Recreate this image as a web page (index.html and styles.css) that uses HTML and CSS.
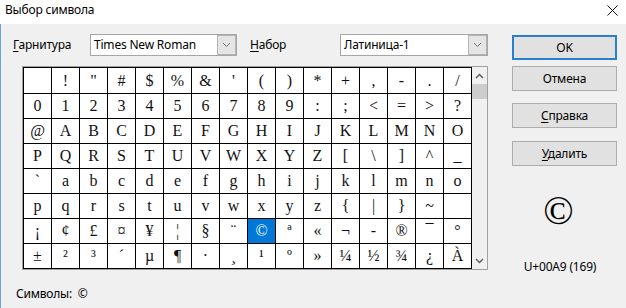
FILE: index.html
```html
<!DOCTYPE html>
<html lang="ru">
<head>
<meta charset="utf-8">
<title>Выбор символа</title>
<link rel="stylesheet" href="styles.css">
</head>
<body>
<div class="dialog">
  <div class="titlebar">
    <span class="title">Выбор символа</span>
    <svg class="close" width="11" height="11" viewBox="0 0 11 11"><path d="M0.5 0.5 L10.5 10.5 M10.5 0.5 L0.5 10.5" stroke="#111" stroke-width="1" fill="none"/></svg>
  </div>
  <div class="body">
    <div class="left">
      <div class="toprow">
        <span class="lbl lbl1"><u>Г</u>арнитура</span>
        <div class="combo combo1"><span class="ctext">Times New Roman</span><span class="dd"><svg width="9" height="6" viewBox="0 0 9 6"><path d="M1 1 L4.5 4.5 L8 1" stroke="#707070" stroke-width="1" fill="none"/></svg></span></div>
        <span class="lbl lbl2"><u>Н</u>абор</span>
        <div class="combo combo2"><span class="ctext">Латиница-1</span><span class="dd"><svg width="9" height="6" viewBox="0 0 9 6"><path d="M1 1 L4.5 4.5 L8 1" stroke="#707070" stroke-width="1" fill="none"/></svg></span></div>
      </div>
      <div class="frame">
        <div class="grid">
          <div class="cell">&nbsp;</div><div class="cell">!</div><div class="cell">"</div><div class="cell">#</div><div class="cell">$</div><div class="cell">%</div><div class="cell">&amp;</div><div class="cell">'</div><div class="cell">(</div><div class="cell">)</div><div class="cell">*</div><div class="cell">+</div><div class="cell">,</div><div class="cell">-</div><div class="cell">.</div><div class="cell">/</div>
          <div class="cell">0</div><div class="cell">1</div><div class="cell">2</div><div class="cell">3</div><div class="cell">4</div><div class="cell">5</div><div class="cell">6</div><div class="cell">7</div><div class="cell">8</div><div class="cell">9</div><div class="cell">:</div><div class="cell">;</div><div class="cell">&lt;</div><div class="cell">=</div><div class="cell">&gt;</div><div class="cell">?</div>
          <div class="cell">@</div><div class="cell">A</div><div class="cell">B</div><div class="cell">C</div><div class="cell">D</div><div class="cell">E</div><div class="cell">F</div><div class="cell">G</div><div class="cell">H</div><div class="cell">I</div><div class="cell">J</div><div class="cell">K</div><div class="cell">L</div><div class="cell">M</div><div class="cell">N</div><div class="cell">O</div>
          <div class="cell">P</div><div class="cell">Q</div><div class="cell">R</div><div class="cell">S</div><div class="cell">T</div><div class="cell">U</div><div class="cell">V</div><div class="cell">W</div><div class="cell">X</div><div class="cell">Y</div><div class="cell">Z</div><div class="cell">[</div><div class="cell">\</div><div class="cell">]</div><div class="cell">^</div><div class="cell">_</div>
          <div class="cell">`</div><div class="cell">a</div><div class="cell">b</div><div class="cell">c</div><div class="cell">d</div><div class="cell">e</div><div class="cell">f</div><div class="cell">g</div><div class="cell">h</div><div class="cell">i</div><div class="cell">j</div><div class="cell">k</div><div class="cell">l</div><div class="cell">m</div><div class="cell">n</div><div class="cell">o</div>
          <div class="cell">p</div><div class="cell">q</div><div class="cell">r</div><div class="cell">s</div><div class="cell">t</div><div class="cell">u</div><div class="cell">v</div><div class="cell">w</div><div class="cell">x</div><div class="cell">y</div><div class="cell">z</div><div class="cell">{</div><div class="cell">|</div><div class="cell">}</div><div class="cell">~</div><div class="cell">&nbsp;</div>
          <div class="cell">¡</div><div class="cell">¢</div><div class="cell">£</div><div class="cell">¤</div><div class="cell">¥</div><div class="cell">¦</div><div class="cell">§</div><div class="cell">¨</div><div class="cell sel">©</div><div class="cell">ª</div><div class="cell">«</div><div class="cell">¬</div><div class="cell">-</div><div class="cell">®</div><div class="cell">¯</div><div class="cell">°</div>
          <div class="cell">±</div><div class="cell">²</div><div class="cell">³</div><div class="cell">´</div><div class="cell">µ</div><div class="cell">¶</div><div class="cell">·</div><div class="cell">¸</div><div class="cell">¹</div><div class="cell">º</div><div class="cell">»</div><div class="cell">¼</div><div class="cell">½</div><div class="cell">¾</div><div class="cell">¿</div><div class="cell">À</div>
        </div>
        <div class="scroll">
          <div class="arrow"><svg width="9" height="6" viewBox="0 0 9 6"><path d="M1 5 L4.5 1.5 L8 5" stroke="#606060" stroke-width="1.5" fill="none"/></svg></div>
          <div class="thumb"></div>
          <div class="track"></div>
          <div class="arrow"><svg width="9" height="6" viewBox="0 0 9 6"><path d="M1 1 L4.5 4.5 L8 1" stroke="#606060" stroke-width="1.5" fill="none"/></svg></div>
        </div>
      </div>
      <div class="sym">Символы:&nbsp; ©</div>
    </div>
    <div class="right">
      <div class="btn ok">OK</div>
      <div class="btn cancel">Отмена</div>
      <div class="btn help"><span><u>С</u>правка</span></div>
      <div class="btn del"><span><u>У</u>далить</span></div>
      <div class="preview">©</div>
      <div class="code">U+00A9 (169)</div>
    </div>
  </div>
</div>
</body>
</html>
```
FILE: styles.css
```css
* { box-sizing: border-box; }
html, body { margin: 0; padding: 0; }
body {
  width: 626px;
  height: 308px;
  overflow: hidden;
  background: #f0f0f0;
  font-family: "Noto Sans", "Open Sans", sans-serif;
  font-size: 12px;
  letter-spacing: -0.2px;
  color: #000;
}
u { text-decoration: underline; text-underline-offset: 2px; }
.dialog {
  width: 626px;
  height: 308px;
  display: flex;
  flex-direction: column;
}
.titlebar {
  height: 24px;
  background: #fff;
  display: flex;
  align-items: center;
  justify-content: space-between;
  padding: 0 8px 0 5px;
}
.title { font-size: 12px; line-height: 16px; margin-top: -4px; }
.close { margin-top: -3px; }
.body {
  flex: 1;
  display: flex;
  padding: 10px 0 0 12px;
  border-left: 1px solid #6aa5dc;
}
.left {
  width: 475px;
  display: flex;
  flex-direction: column;
}
.toprow {
  display: flex;
  align-items: center;
  height: 22px;
}
.lbl { line-height: 16px; }
.lbl1 { width: 77px; }
.lbl2 { width: 90px; margin-left: 13px; }
.combo {
  height: 22px;
  background: #fff;
  border: 1px solid #a6a6a6;
  display: flex;
  align-items: center;
  padding-left: 3px;
}
.combo1 { width: 147px; }
.combo2 { width: 148px; }
.ctext { line-height: 16px; }
.dd {
  margin-left: auto;
  width: 19px;
  height: 20px;
  background: #e5e5e5;
  border: 1px solid #b4b4b4;
  display: flex;
  align-items: center;
  justify-content: center;
}
.frame {
  margin: 10px 0 0 9px;
  width: 466px;
  height: 204px;
  border: 1px solid #a0a0a0;
  display: flex;
}
.grid {
  width: 449px;
  height: 202px;
  display: grid;
  grid-template-columns: repeat(16, 27px);
  grid-template-rows: 25px repeat(7, 24px);
  gap: 1px;
  padding: 1px;
  background: #000;
  letter-spacing: 0;
}
.cell {
  background: #fff;
  display: flex;
  align-items: center;
  justify-content: center;
  font-family: "Liberation Serif", "Times New Roman", serif;
  font-size: 16px;
  line-height: 1;
  color: #111;
}
.cell.sel { background: #0078d7; color: #fff; }
.scroll {
  width: 15px;
  display: flex;
  flex-direction: column;
  background: #f0f0f0;
}
.arrow {
  height: 17px;
  display: flex;
  align-items: center;
  justify-content: center;
}
.thumb {
  height: 15px;
  background: #cdcdcd;
}
.track { flex: 1; }
.sym {
  margin: 15px 0 0 3px;
  line-height: 17px;
}
.right {
  margin-left: 24px;
  padding-top: 1px;
  width: 105px;
  display: flex;
  flex-direction: column;
}
.btn {
  width: 105px;
  height: 25px;
  background: #e1e1e1;
  border: 1px solid #adadad;
  display: flex;
  align-items: center;
  justify-content: center;
  line-height: 16px;
}
.ok { border: 2px solid #2b7fd0; }
.cancel { margin-top: 6px; }
.help { margin-top: 12px; }
.del { margin-top: 13px; }
.preview {
  margin-top: 20px;
  height: 50px;
  padding-right: 12px;
  text-align: center;
  font-family: "Liberation Serif", "Times New Roman", serif;
  font-size: 40px;
  line-height: 50px;
  letter-spacing: 0;
}
.code {
  margin-top: 23px;
  padding-right: 9px;
  text-align: center;
  line-height: 16px;
}
```
